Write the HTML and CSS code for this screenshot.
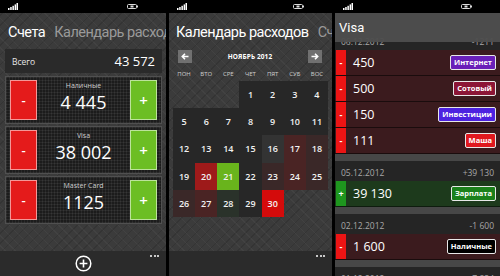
FILE: index.html
```html
<!DOCTYPE html>
<html lang="ru">
<head>
<meta charset="utf-8">
<link rel="stylesheet" href="styles.css">
</head>
<body>
<div class="screens">
  <!-- Phone 1 -->
  <div class="phone p1">
    <div class="status">
      <svg class="signal" width="10" height="7" viewBox="0 0 10 7"><rect x="0" y="5" width="1.5" height="2"/><rect x="2.2" y="4" width="1.5" height="3"/><rect x="4.4" y="2.8" width="1.5" height="4.2"/><rect x="6.6" y="1.4" width="1.5" height="5.6"/><rect x="8.5" y="0" width="1.5" height="7"/></svg>
      <svg class="battery" width="11" height="5" viewBox="0 0 11 5"><rect x="0.5" y="0.5" width="9" height="4" rx="1" fill="none" stroke="#ddd" stroke-width="1"/><rect x="10" y="1.5" width="1" height="2" fill="#ddd"/><rect x="3.5" y="1.5" width="3" height="2" fill="#ddd"/></svg>
    </div>
    <div class="pivot"><span class="cur">Счета</span><span class="next">Календарь расходов</span></div>
    <div class="total"><span class="total-label">Всего</span><span class="total-value">43 572</span></div>
    <div class="cards">
      <div class="card">
        <div class="btn minus">-</div>
        <div class="card-body"><div class="card-label">Наличные</div><div class="card-value">4 445</div></div>
        <div class="btn plus">+</div>
      </div>
      <div class="card">
        <div class="btn minus">-</div>
        <div class="card-body"><div class="card-label">Visa</div><div class="card-value">38 002</div></div>
        <div class="btn plus">+</div>
      </div>
      <div class="card">
        <div class="btn minus">-</div>
        <div class="card-body"><div class="card-label">Master Card</div><div class="card-value">1125</div></div>
        <div class="btn plus">+</div>
      </div>
    </div>
    <div class="fill"></div>
    <div class="appbar">
      <svg class="add-icon" width="17" height="17" viewBox="0 0 17 17"><circle cx="8.5" cy="8.5" r="7.3" fill="none" stroke="#fff" stroke-width="1.5"/><path d="M8.5 4.6v7.8M4.6 8.5h7.8" stroke="#fff" stroke-width="1.6"/></svg>
      <div class="dots"><i></i><i></i><i></i></div>
    </div>
  </div>

  <!-- Phone 2 -->
  <div class="phone p2">
    <div class="status">
      <svg class="signal" width="10" height="7" viewBox="0 0 10 7"><rect x="0" y="5" width="1.5" height="2"/><rect x="2.2" y="4" width="1.5" height="3"/><rect x="4.4" y="2.8" width="1.5" height="4.2"/><rect x="6.6" y="1.4" width="1.5" height="5.6"/><rect x="8.5" y="0" width="1.5" height="7"/></svg>
      <svg class="battery" width="11" height="5" viewBox="0 0 11 5"><rect x="0.5" y="0.5" width="9" height="4" rx="1" fill="none" stroke="#ddd" stroke-width="1"/><rect x="10" y="1.5" width="1" height="2" fill="#ddd"/><rect x="3.5" y="1.5" width="3" height="2" fill="#ddd"/></svg>
    </div>
    <div class="pivot"><span class="cur">Календарь расходов</span><span class="next">Счета</span></div>
    <div class="month-nav">
      <div class="nav-btn"><svg width="8" height="7" viewBox="0 0 8 7"><path d="M7.5 3.5H1.5M4 0.8L1.3 3.5 4 6.2" fill="none" stroke="#fff" stroke-width="1.6"/></svg></div>
      <div class="month">НОЯБРЬ 2012</div>
      <div class="nav-btn"><svg width="8" height="7" viewBox="0 0 8 7"><path d="M0.5 3.5H6.5M4 0.8L6.7 3.5 4 6.2" fill="none" stroke="#fff" stroke-width="1.6"/></svg></div>
    </div>
    <div class="weekdays"><span>ПОН</span><span>ВТО</span><span>СРЕ</span><span>ЧЕТ</span><span>ПЯТ</span><span>СУБ</span><span>ВОС</span></div>
    <div class="cal">
      <div class="day empty"></div><div class="day empty"></div><div class="day empty"></div>
      <div class="day">1</div><div class="day">2</div><div class="day">3</div><div class="day">4</div>
      <div class="day">5</div><div class="day">6</div><div class="day">7</div><div class="day">8</div><div class="day">9</div><div class="day">10</div><div class="day">11</div>
      <div class="day">12</div><div class="day">13</div><div class="day">14</div><div class="day">15</div><div class="day d-gray">16</div><div class="day d-red2">17</div><div class="day d-red1">18</div>
      <div class="day">19</div><div class="day d-red">20</div><div class="day d-green">21</div><div class="day">22</div><div class="day d-red1">23</div><div class="day d-red2">24</div><div class="day d-red1">25</div>
      <div class="day d-red1">26</div><div class="day d-red2">27</div><div class="day d-green1">28</div><div class="day">29</div><div class="day d-bright">30</div><div class="day empty"></div><div class="day empty"></div>
    </div>
    <div class="fill"></div>
    <div class="appbar">
      <div class="dots"><i></i><i></i><i></i></div>
    </div>
  </div>

  <!-- Phone 3 -->
  <div class="phone p3">
    <div class="status">
      <svg class="signal" width="10" height="7" viewBox="0 0 10 7"><rect x="0" y="5" width="1.5" height="2"/><rect x="2.2" y="4" width="1.5" height="3"/><rect x="4.4" y="2.8" width="1.5" height="4.2"/><rect x="6.6" y="1.4" width="1.5" height="5.6"/><rect x="8.5" y="0" width="1.5" height="7"/></svg>
      <svg class="battery" width="11" height="5" viewBox="0 0 11 5"><rect x="0.5" y="0.5" width="9" height="4" rx="1" fill="none" stroke="#ddd" stroke-width="1"/><rect x="10" y="1.5" width="1" height="2" fill="#ddd"/><rect x="3.5" y="1.5" width="3" height="2" fill="#ddd"/></svg>
    </div>
    <div class="list">
      <div class="date-row"><span>06.12.2012</span><span>-1211</span></div>
      <div class="op neg"><div class="stripe">-</div><div class="amount">450</div><div class="tag t-internet">Интернет</div></div>
      <div class="op neg"><div class="stripe">-</div><div class="amount">500</div><div class="tag t-mobile">Сотовый</div></div>
      <div class="op neg"><div class="stripe">-</div><div class="amount">150</div><div class="tag t-invest">Инвестиции</div></div>
      <div class="op neg"><div class="stripe">-</div><div class="amount">111</div><div class="tag t-masha">Маша</div></div>
      <div class="band"></div>
      <div class="date-row"><span>05.12.2012</span><span>+39 130</span></div>
      <div class="op pos"><div class="stripe">+</div><div class="amount">39 130</div><div class="tag t-salary">Зарплата</div></div>
      <div class="band"></div>
      <div class="date-row"><span>02.12.2012</span><span>-1 600</span></div>
      <div class="op neg"><div class="stripe">-</div><div class="amount">1 600</div><div class="tag t-cash">Наличные</div></div>
      <div class="band"></div>
      <div class="date-row"><span>01.12.2012</span><span>7 834</span></div>
    </div>
    <div class="title-band">Visa</div>
  </div>
</div>
</body>
</html>
```

FILE: styles.css
```css
* { box-sizing: border-box; }
html, body { margin: 0; padding: 0; }
body {
  background: #000;
  width: 500px;
  height: 276px;
  overflow: hidden;
  font-family: "Open Sans", "Noto Sans", sans-serif;
  color: #fff;
}
.screens {
  display: flex;
  gap: 3px;
  height: 276px;
}
.phone {
  position: relative;
  height: 276px;
  display: flex;
  flex-direction: column;
  overflow: hidden;
  background-color: #3b3b3b;
  background-image:
    repeating-linear-gradient(45deg, rgba(255,255,255,0.035) 0 1px, transparent 1px 7px),
    repeating-linear-gradient(-45deg, rgba(0,0,0,0.12) 0 1px, transparent 1px 7px);
}
.p1 { width: 166px; }
.p2 { width: 163px; }
.p3 { width: 165px; background: #222; }

.status {
  height: 13px;
  flex: none;
  background: #000;
  display: flex;
  align-items: center;
  padding-left: 8px;
}
.signal { fill: #fff; }
.battery { margin-left: auto; margin-right: 28px; }

.pivot {
  height: 36px;
  flex: none;
  padding: 10px 0 0 8px;
  font-family: Roboto, "Open Sans", sans-serif;
  font-size: 14.5px;
  letter-spacing: -0.5px;
  line-height: 20px;
  white-space: nowrap;
  overflow: hidden;
}
.pivot .cur { color: #fff; margin-right: 9px; }
.pivot .next { color: #9a9a9a; }
.p2 .pivot { padding-left: 7px; }

/* total */
.total {
  margin: 0 4px 0 5px;
  height: 24px;
  flex: none;
  background: #2a2a2a;
  display: flex;
  align-items: center;
  justify-content: space-between;
  padding: 0 7px 0 7px;
}
.total-label { font-size: 8.5px; color: #e6e6e6; }
.total-value { font-size: 13px; }

.cards {
  margin: 3px 4px 0 5px;
  display: flex;
  flex-direction: column;
  gap: 2px;
}
.card {
  height: 48px;
  border: 1px solid #505050;
  background-color: #1c1c1c;
  background-image:
    linear-gradient(rgba(255,255,255,0.06) 1px, transparent 1px),
    linear-gradient(90deg, rgba(255,255,255,0.06) 1px, transparent 1px);
  background-size: 3px 3px;
  display: grid;
  grid-template-columns: 27px 1fr 27px;
  align-items: center;
  padding: 0 4px 0 4px;
}
.btn {
  height: 40px;
  border: 1px solid rgba(255,255,255,0.55);
  display: flex;
  align-items: center;
  justify-content: center;
  font-size: 13px;
  font-weight: 600;
  color: #fff;
}
.minus { background: #e41b1b; }
.plus { background: #6cbe24; font-size: 15px; }
.card-body { text-align: center; align-self: start; padding-top: 4px; }
.card-label { font-size: 7px; color: #cfcfcf; line-height: 9px; }
.card-value { font-size: 18px; line-height: 24px; }

.fill { flex: 1; }
.appbar {
  height: 25px;
  flex: none;
  background: #2b2b2b;
  display: flex;
  justify-content: center;
  align-items: flex-start;
  position: relative;
}
.add-icon { margin-top: 4px; }
.dots {
  position: absolute;
  right: 7px;
  top: 4px;
  display: flex;
  gap: 1.5px;
}
.dots i { width: 2px; height: 2px; background: #fff; border-radius: 1px; display: block; }

/* calendar */
.month-nav {
  display: flex;
  align-items: center;
  justify-content: space-between;
  margin: 1px 10px 0 9px;
  height: 13px;
}
.nav-btn {
  width: 14px;
  height: 13px;
  background: #707070;
  display: flex;
  align-items: center;
  justify-content: center;
}
.month { font-size: 6.5px; font-weight: 700; letter-spacing: 0.1px; }
.weekdays {
  margin: 7px 4px 0 4px;
  display: grid;
  grid-template-columns: repeat(7, 1fr);
  font-size: 6px;
  color: #cfcfcf;
  text-align: center;
  line-height: 8px;
}
.cal {
  margin: 3px 4px 0 4px;
  display: grid;
  grid-template-columns: repeat(7, 1fr);
  grid-auto-rows: 27.2px;
}
.day {
  background: #272727;
  display: flex;
  align-items: center;
  justify-content: center;
  font-size: 9px;
  font-weight: 600;
  color: #f2f2f2;
}
.day.empty { background: transparent; }
.d-gray { background: #333; }
.d-red1 { background: #3a2828; }
.d-red2 { background: #4a2424; }
.d-red { background: #9e1a1a; }
.d-green { background: #69b41c; }
.d-green1 { background: #2a322a; }
.d-bright { background: #d40b0b; }

/* list */
.list {
  padding-top: 17px;
  display: flex;
  flex-direction: column;
}
.date-row {
  height: 20px;
  flex: none;
  background: #252525;
  display: flex;
  justify-content: space-between;
  align-items: center;
  padding: 2px 6px 0 6px;
  font-size: 8.5px;
  color: #a8a8a8;
}
.band { height: 7px; flex: none; background: #474747; }
.op {
  height: 26px;
  flex: none;
  display: flex;
  align-items: center;
  border-bottom: 1px solid #1a0c0d;
}
.op.neg { background: #3b1b1e; }
.op.pos { background: #1d3a1c; border-bottom-color: #0e1c0e; }
.stripe {
  width: 10px;
  align-self: stretch;
  display: flex;
  align-items: center;
  justify-content: center;
  font-size: 9px;
  font-weight: 700;
  color: #fff;
  margin-left: 1px;
}
.neg .stripe { background: #ec1414; }
.pos .stripe { background: #1e961e; }
.amount { margin-left: 7px; font-size: 12.5px; }
.tag {
  margin-left: auto;
  margin-right: 4px;
  height: 15px;
  border: 1px solid #e8e8e8;
  border-radius: 2px;
  padding: 0 3px;
  font-size: 7.5px;
  font-weight: 700;
  line-height: 13px;
}
.t-internet { background: #6a1fb8; }
.t-mobile { background: #8c1536; }
.t-invest { background: #4d22e0; }
.t-masha { background: #e0181e; }
.t-salary { background: #1b801b; }
.t-cash { background: #000; }

.title-band {
  position: absolute;
  top: 13px;
  left: 0;
  right: 0;
  height: 29px;
  background: rgba(78,78,78,0.96);
  font-family: Roboto, "Open Sans", sans-serif;
  font-size: 13px;
  line-height: 29px;
  padding-left: 4px;
}
```
